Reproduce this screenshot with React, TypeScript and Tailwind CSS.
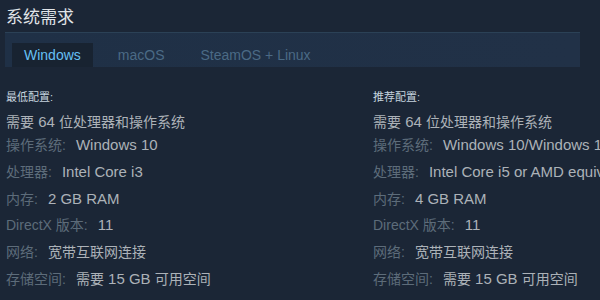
import React from "react";

const FONT = {
  fontFamily: '"Liberation Sans", "Noto Sans CJK SC", sans-serif',
};

type Spec = { label: string; value: string };

const minimum: Spec[] = [
  { label: "操作系统:", value: "Windows 10" },
  { label: "处理器:", value: "Intel Core i3" },
  { label: "内存:", value: "2 GB RAM" },
  { label: "DirectX 版本:", value: "11" },
  { label: "网络:", value: "宽带互联网连接" },
  { label: "存储空间:", value: "需要 15 GB 可用空间" },
];

const recommended: Spec[] = [
  { label: "操作系统:", value: "Windows 10/Windows 11" },
  { label: "处理器:", value: "Intel Core i5 or AMD equivalent" },
  { label: "内存:", value: "4 GB RAM" },
  { label: "DirectX 版本:", value: "11" },
  { label: "网络:", value: "宽带互联网连接" },
  { label: "存储空间:", value: "需要 15 GB 可用空间" },
];

// latin runs render a touch larger than the CJK glyphs, like the original font
const Mixed = ({ text }: { text: string }) => (
  <>
    {text.split(/([\x20-\x7E]+)/).map((part, i) =>
      /[\x20-\x7E]/.test(part) ? (
        <span key={i} className="text-[15px]">
          {part}
        </span>
      ) : (
        <span key={i}>{part}</span>
      )
    )}
  </>
);

const Column = ({ heading, specs }: { heading: string; specs: Spec[] }) => (
  <div className="flex flex-col">
    <div className="text-[11px] leading-[14px] text-[#c6d4df] mb-[9px]">
      {heading}
    </div>
    <div className="text-[14px] leading-[18px] text-[#acb2b8] mb-[5px] whitespace-nowrap">
      <Mixed text="需要 64 位处理器和操作系统" />
    </div>
    <ul className="flex flex-col gap-[8.8px]">
      {specs.map((s) => (
        <li
          key={s.label}
          className="text-[14px] leading-[18px] whitespace-nowrap"
        >
          <span className="text-[#5d6c7a]">{s.label}</span>
          <span className="text-[#acb2b8] ml-[10px]">
            <Mixed text={s.value} />
          </span>
        </li>
      ))}
    </ul>
  </div>
);

export default function App() {
  return (
    <div
      className="w-[600px] h-[300px] overflow-hidden bg-[#1b2636]"
      style={FONT}
    >
      <h2 className="pl-[6px] pt-[7px] text-[17px] leading-[22px] text-[#e0e4e8] font-normal">
        系统需求
      </h2>
      <div className="ml-[5px] mt-[3px] w-[575px] h-[35px] border-t border-[#2b4156] bg-gradient-to-r from-[#1f3046] to-[#213147] flex items-end pl-[7px]">
        <div className="h-[24px] px-[12px] bg-[#182331] text-[#66c0f4] text-[14px] flex items-center">
          Windows
        </div>
        <div className="h-[24px] ml-[13px] px-[12px] text-[#4b6a85] text-[14px] flex items-center">
          macOS
        </div>
        <div className="h-[24px] ml-[12px] px-[12px] text-[#4b6a85] text-[14px] flex items-center">
          SteamOS + Linux
        </div>
      </div>
      <div className="w-[740px] grid grid-cols-[367px_1fr] pl-[6px] pt-[23px]">
        <Column heading="最低配置:" specs={minimum} />
        <Column heading="推荐配置:" specs={recommended} />
      </div>
    </div>
  );
}
